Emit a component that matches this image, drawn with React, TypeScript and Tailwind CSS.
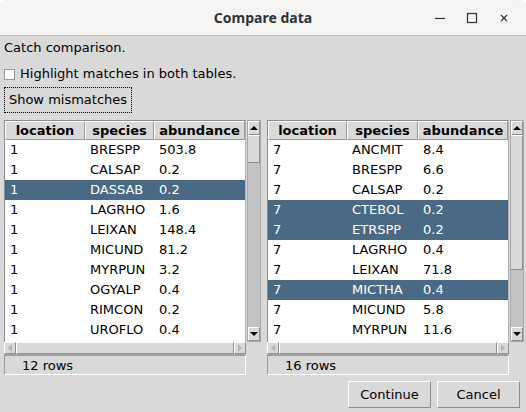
import React from "react";

type Row = { loc: string; sp: string; ab: string; hl?: boolean };

const leftRows: Row[] = [
  { loc: "1", sp: "BRESPP", ab: "503.8" },
  { loc: "1", sp: "CALSAP", ab: "0.2" },
  { loc: "1", sp: "DASSAB", ab: "0.2", hl: true },
  { loc: "1", sp: "LAGRHO", ab: "1.6" },
  { loc: "1", sp: "LEIXAN", ab: "148.4" },
  { loc: "1", sp: "MICUND", ab: "81.2" },
  { loc: "1", sp: "MYRPUN", ab: "3.2" },
  { loc: "1", sp: "OGYALP", ab: "0.4" },
  { loc: "1", sp: "RIMCON", ab: "0.2" },
  { loc: "1", sp: "UROFLO", ab: "0.4" },
];

const rightRows: Row[] = [
  { loc: "7", sp: "ANCMIT", ab: "8.4" },
  { loc: "7", sp: "BRESPP", ab: "6.6" },
  { loc: "7", sp: "CALSAP", ab: "0.2" },
  { loc: "7", sp: "CTEBOL", ab: "0.2", hl: true },
  { loc: "7", sp: "ETRSPP", ab: "0.2", hl: true },
  { loc: "7", sp: "LAGRHO", ab: "0.4" },
  { loc: "7", sp: "LEIXAN", ab: "71.8" },
  { loc: "7", sp: "MICTHA", ab: "0.4", hl: true },
  { loc: "7", sp: "MICUND", ab: "5.8" },
  { loc: "7", sp: "MYRPUN", ab: "11.6" },
];

function Tri({ dir, color }: { dir: "up" | "down" | "left" | "right"; color: string }) {
  const pts =
    dir === "up"
      ? "0,5 8,5 4,1"
      : dir === "down"
      ? "0,1 8,1 4,5"
      : dir === "left"
      ? "5,0 5,8 1,4"
      : "1,0 1,8 5,4";
  const w = dir === "up" || dir === "down" ? 8 : 6;
  const h = dir === "up" || dir === "down" ? 6 : 8;
  return (
    <svg width={w} height={h} viewBox={`0 0 ${w} ${h}`}>
      <polygon points={pts} fill={color} />
    </svg>
  );
}

function ArrowBox({ dir, color, className }: { dir: "up" | "down" | "left" | "right"; color: string; className: string }) {
  return (
    <div
      className={`flex items-center justify-center bg-[#d9d9d9] border-t border-l border-t-white border-l-white border-r border-b border-r-[#8e8e8e] border-b-[#8e8e8e] ${className}`}
    >
      <Tri dir={dir} color={color} />
    </div>
  );
}

function VScroll({ thumb }: { thumb: number }) {
  return (
    <div className="w-[14px] h-[222px] flex flex-col bg-[#c3c3c3] border border-[#a8a8a8] ml-[1px]">
      <ArrowBox dir="up" color="#000" className="h-[14px] w-full shrink-0" />
      <div
        className="w-full shrink-0 bg-[#d9d9d9] border-b border-r border-b-[#8e8e8e] border-r-[#8e8e8e] border-t border-t-white"
        style={{ height: thumb }}
      />
      <div className="flex-1 bg-[#c3c3c3]" />
      <ArrowBox dir="down" color="#000" className="h-[14px] w-full shrink-0" />
    </div>
  );
}

function HScroll() {
  return (
    <div className="w-[242px] h-[13px] flex bg-[#d9d9d9] border-b border-[#a8a8a8]">
      <ArrowBox dir="left" color="#b4b4b4" className="w-[12px] h-full shrink-0" />
      <div className="flex-1 bg-[#d9d9d9] border-t border-l border-t-white border-l-white border-r border-b border-r-[#8e8e8e] border-b-[#8e8e8e]" />
      <ArrowBox dir="right" color="#b4b4b4" className="w-[12px] h-full shrink-0" />
    </div>
  );
}

function HeaderCell({ label, w }: { label: string; w: string }) {
  return (
    <div
      className={`${w} h-full flex items-center justify-center font-bold bg-[#d9d9d9] border-t border-l border-t-white border-l-white border-r border-b border-r-[#9a9a9a] border-b-[#9a9a9a]`}
    >
      {label}
    </div>
  );
}

function TableGroup({ rows, count, thumb, widths }: { rows: Row[]; count: string; thumb: number; widths: [string, string, string] }) {
  return (
    <div className="flex flex-col w-[257px]">
      <div className="flex h-[222px]">
        <div className="w-[242px] h-full bg-white border-t border-l border-[#8d8d8d] border-r border-r-[#b0b0b0] flex flex-col overflow-hidden">
          <div className="flex h-[19px] shrink-0 text-[13px]">
            <HeaderCell label="location" w={widths[0]} />
            <HeaderCell label="species" w={widths[1]} />
            <HeaderCell label="abundance" w={widths[2]} />
          </div>
          {rows.map((r, i) => (
            <div
              key={i}
              className={`flex h-[20px] shrink-0 items-center text-[13px] ${r.hl ? "bg-[#4a6984] text-white" : "text-black"}`}
            >
              <div className={`${widths[0]} pl-[5px]`}>{r.loc}</div>
              <div className={`${widths[1]} pl-[5px]`}>{r.sp}</div>
              <div className={`${widths[2]} pl-[5px]`}>{r.ab}</div>
            </div>
          ))}
        </div>
        <VScroll thumb={thumb} />
      </div>
      <HScroll />
      <div className="w-[242px] h-[20px] flex items-center pl-[17px] pt-[2px] text-[13px] border-t border-l border-t-[#9a9a9a] border-l-[#9a9a9a] border-r border-b border-r-white border-b-white">
        {count}
      </div>
    </div>
  );
}

export default function App() {
  return (
    <div className="w-[526px] h-[412px] bg-white overflow-hidden" style={{ fontFamily: '"DejaVu Sans", sans-serif' }}>
      <div className="w-full h-full flex flex-col bg-[#d9d9d9] rounded-t-[8px] overflow-hidden">
        <div className="h-[36px] shrink-0 bg-[#f6f5f4] border-b border-[#bdbcb9] relative flex items-center justify-center">
          <span
            className="text-[14px] font-bold text-[#2e3436]"
            style={{ fontFamily: '"Noto Sans", "DejaVu Sans", sans-serif' }}
          >
            Compare data
          </span>
          <div className="absolute right-0 top-0 h-full flex items-center">
            <svg width="12" height="12" viewBox="0 0 12 12" className="mr-[20px]">
              <line x1="1" y1="6.5" x2="11" y2="6.5" stroke="#2e3436" strokeWidth="1.2" />
            </svg>
            <svg width="12" height="12" viewBox="0 0 12 12" className="mr-[21px]">
              <rect x="1.5" y="1.5" width="9" height="9" fill="none" stroke="#2e3436" strokeWidth="1.2" />
            </svg>
            <svg width="10" height="10" viewBox="0 0 10 10" className="mr-[17px]">
              <line x1="2" y1="2" x2="8" y2="8" stroke="#2e3436" strokeWidth="1.2" />
              <line x1="8" y1="2" x2="2" y2="8" stroke="#2e3436" strokeWidth="1.2" />
            </svg>
          </div>
        </div>
        <div className="flex flex-col px-[4px] text-[13px] text-black">
          <div className="h-[20px] mt-[2px] flex items-center">Catch comparison.</div>
          <div className="h-[20px] mt-[6px] flex items-center">
            <div className="w-[11px] h-[11px] bg-white border border-[#9a9a9a] mr-[5px]" />
            <span>Highlight matches in both tables.</span>
          </div>
          <div className="mt-[3px] h-[26px] w-[128px] border border-dotted border-black flex items-center justify-center">
            Show mismatches
          </div>
          <div className="mt-[7px] flex gap-[6px]">
            <TableGroup rows={leftRows} count="12 rows" thumb={28} widths={["w-[80px]", "w-[69px]", "w-[91px]"]} />
            <TableGroup rows={rightRows} count="16 rows" thumb={135} widths={["w-[79px]", "w-[71px]", "w-[90px]"]} />
          </div>
          <div className="mt-[6px] flex justify-end gap-[6px] pr-[2px]">
            <div className="w-[83px] h-[27px] flex items-center justify-center border border-t-white border-l-white border-r-[#8e8e8e] border-b-[#8e8e8e] bg-[#d9d9d9]">
              Continue
            </div>
            <div className="w-[83px] h-[27px] flex items-center justify-center border border-t-white border-l-white border-r-[#8e8e8e] border-b-[#8e8e8e] bg-[#d9d9d9]">
              Cancel
            </div>
          </div>
        </div>
      </div>
    </div>
  );
}
